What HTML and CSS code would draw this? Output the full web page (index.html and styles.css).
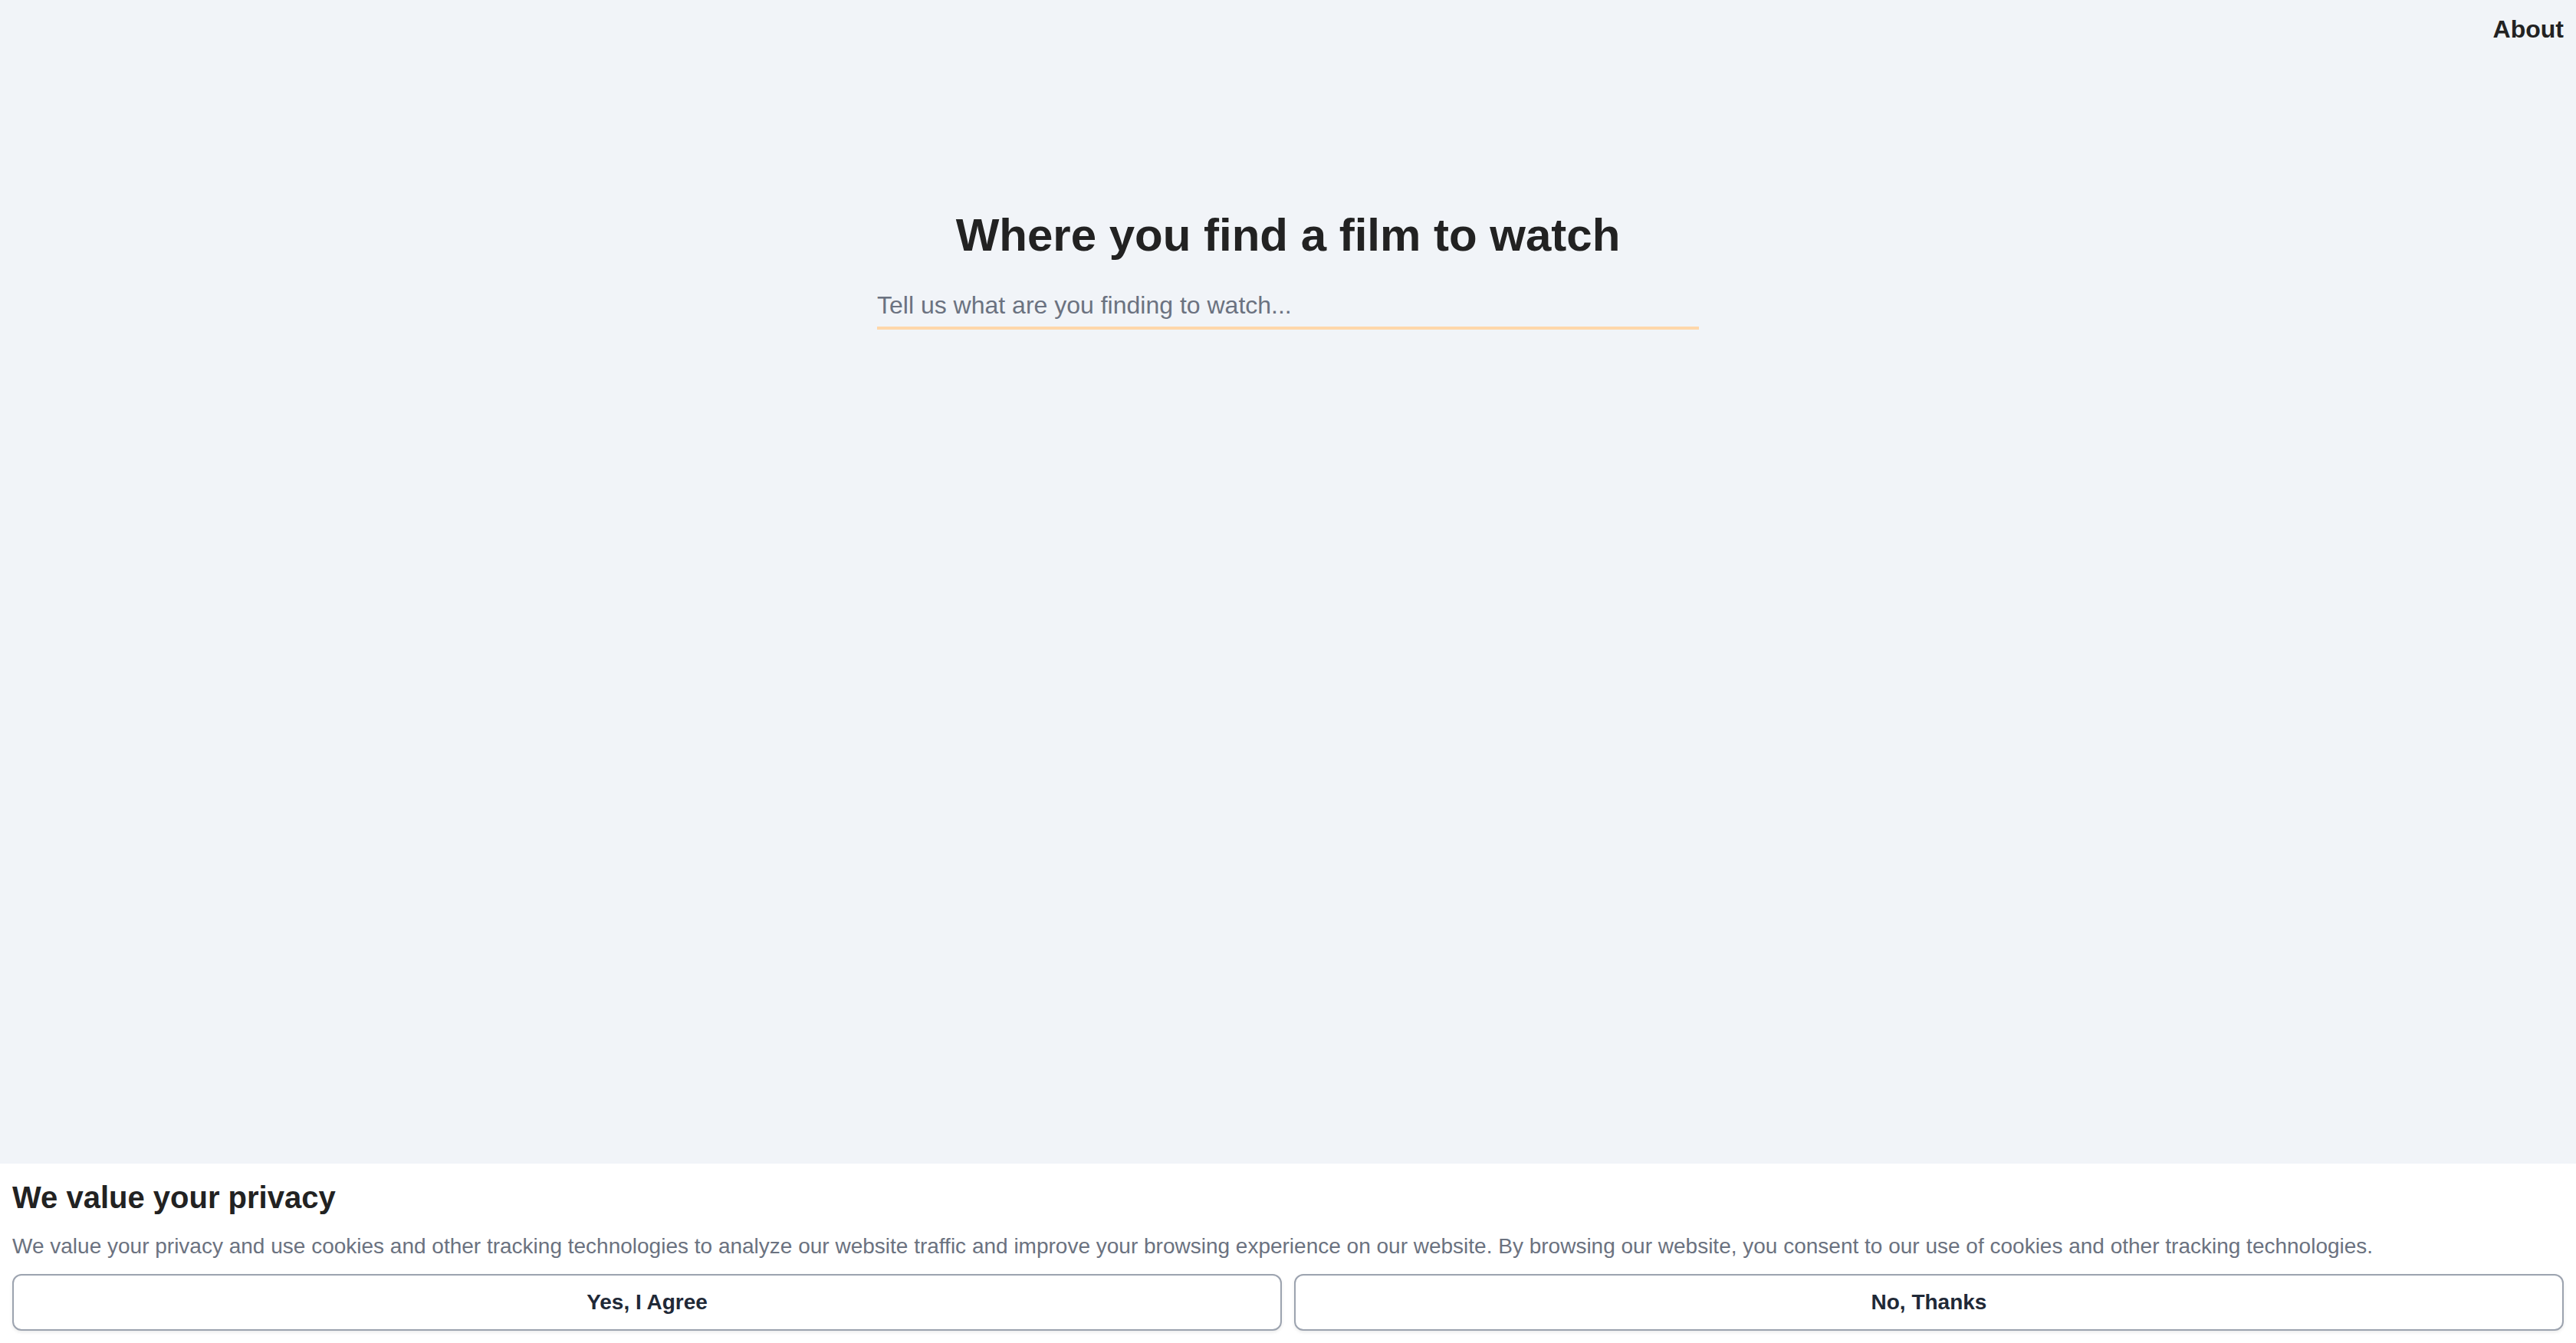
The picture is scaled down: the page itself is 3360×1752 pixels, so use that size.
FILE: index.html
```html
<!DOCTYPE html>
<html lang="en">
<head>
<meta charset="utf-8">
<title>Find a film to watch</title>
<link rel="stylesheet" href="styles.css">
</head>
<body>
  <header class="topbar">
    <a class="topbar-link" href="#">About</a>
  </header>

  <main class="hero">
    <h1 class="hero-title">Where you find a film to watch</h1>
    <input class="hero-search" type="text" placeholder="Tell us what are you finding to watch...">
  </main>

  <section class="consent">
    <h2 class="consent-title">We value your privacy</h2>
    <p class="consent-text">We value your privacy and use cookies and other tracking technologies to analyze our website traffic and improve your browsing experience on our website. By browsing our website, you consent to our use of cookies and other tracking technologies.</p>
    <div class="consent-actions">
      <button class="consent-btn" type="button">Yes, I Agree</button>
      <button class="consent-btn" type="button">No, Thanks</button>
    </div>
  </section>
</body>
</html>
```

FILE: styles.css
```css
* {
  box-sizing: border-box;
}

html, body {
  margin: 0;
  padding: 0;
}

body {
  min-height: 100vh;
  background: #f1f4f8;
  font-family: "Liberation Sans", Arial, sans-serif;
  color: #222222;
}

/* top navigation */
.topbar {
  display: flex;
  justify-content: flex-end;
  padding: 14px 16px 12px;
}

.topbar-link {
  font-size: 32px;
  line-height: 48px;
  font-weight: 700;
  color: #222222;
  text-decoration: none;
}

/* search hero */
.hero {
  display: flex;
  flex-direction: column;
  align-items: center;
  padding-top: 197px;
}

.hero-title {
  margin: 0 0 27px;
  font-size: 60px;
  line-height: 72px;
  font-weight: 700;
  color: #222222;
}

.hero-search {
  width: 1072px;
  padding: 4px 0;
  border: 0;
  border-bottom: 4px solid #fed7aa;
  background: transparent;
  font-family: inherit;
  font-size: 32px;
  line-height: 48px;
  color: #222222;
  outline: none;
}

.hero-search::placeholder {
  color: #6b7280;
}

/* cookie consent banner */
.consent {
  position: fixed;
  left: 0;
  right: 0;
  bottom: 0;
  background: #ffffff;
  padding: 16px 16px 16px;
}

.consent-title {
  margin: 0 0 16px;
  font-size: 40px;
  line-height: 56px;
  font-weight: 700;
  color: #222222;
}

.consent-text {
  margin: 0 0 16px;
  font-size: 28px;
  line-height: 40px;
  color: #6b7280;
}

.consent-actions {
  display: grid;
  grid-template-columns: 1fr 1fr;
  gap: 16px;
}

.consent-btn {
  height: 74px;
  padding: 0 16px;
  background: #ffffff;
  border: 2px solid #9ca3af;
  border-radius: 12px;
  box-shadow: 0 2px 4px rgba(0, 0, 0, 0.08);
  font-family: inherit;
  font-size: 28px;
  line-height: 40px;
  font-weight: 700;
  color: #1f2937;
  cursor: pointer;
}
```
